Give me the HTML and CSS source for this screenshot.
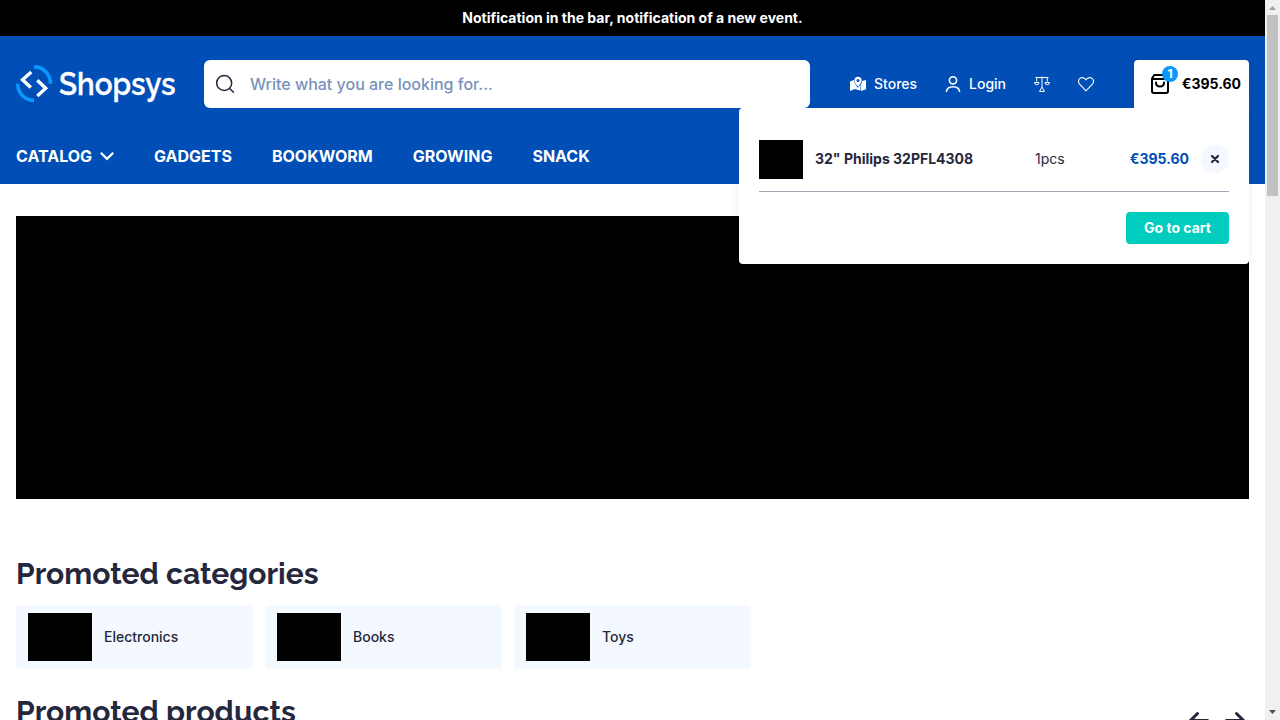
FILE: index.html
```html
<!DOCTYPE html>
<html lang="en">
<head>
<meta charset="utf-8">
<title>Shopsys</title>
<link rel="stylesheet" href="styles.css">
</head>
<body>
<div class="viewport">
  <div class="page">
    <div class="notice">Notification in the bar, notification of a new event.</div>
    <header class="header">
      <div class="topbar">
        <a class="logo">
          <svg width="160" height="40" viewBox="0 0 160 40">
            <g fill="none" stroke="#0a97ff" stroke-width="3.600">
              <path d="M18 2.900A16.400 16.400 0 0 1 34.400 19.700"/>
              <path d="M18 36.400A16.400 16.400 0 0 1 1.700 19.700"/>
            </g>
            <g fill="none" stroke="#fff" stroke-width="3.400">
              <path d="M15.300 7.900L6.500 15.700L14.800 23.600"/>
              <path d="M21.300 16.200L29.700 24.200L21.300 32"/>
            </g>
            <text class="logo-text" x="43" y="30.500" textLength="116.500" lengthAdjust="spacingAndGlyphs">Shopsys</text>
          </svg>
        </a>
        <div class="search">
          <svg width="20" height="20" viewBox="0 0 20 20" fill="none" stroke="#25283d" stroke-width="1.500" stroke-linecap="round"><circle cx="8.200" cy="9" r="7.500"/><path d="M13.700 14.500L17.400 18.200"/></svg>
          <span>Write what you are looking for...</span>
        </div>
        <div class="links">
          <a class="link">
            <svg width="16" height="16" viewBox="0 0 16 16"><path fill="#fff" d="M0 5.500L3.900 4Q4.100 7.200 6.200 9.600V13.600L5 13.100L0 15ZM6.300 9.800L8 11.700L10.500 8.600V14.500L6.300 13.500ZM11.100 8Q12.200 6.400 12.200 5L16 4V13.200L11.100 15Z"/><path fill="#fff" fill-rule="evenodd" d="M8 .8A3.600 3.600 0 0 1 11.600 4.400C11.600 6.600 9.500 8.900 8 10.700C6.500 8.900 4.400 6.600 4.400 4.400A3.600 3.600 0 0 1 8 .8ZM8 2.900A1.500 1.500 0 1 0 8 5.900A1.500 1.500 0 1 0 8 2.900Z"/></svg>
            <span>Stores</span>
          </a>
          <a class="link">
            <svg width="16" height="16" viewBox="0 0 16 16" fill="none" stroke="#fff" stroke-width="1.600"><circle cx="8" cy="4.300" r="3.600"/><path d="M1.400 16Q1.600 10.700 8 10.700Q14.400 10.700 14.600 16"/></svg>
            <span>Login</span>
          </a>
          <a class="link">
            <svg width="16" height="16" viewBox="0 0 16 16" fill="none" stroke="#fff"><path d="M1.500 1.500H14.500M8 .5V11M2.700 1.500V5.500M13.300 1.500V5.500M.5 6.500H5Q5 8.700 2.700 8.700Q.5 8.700 .5 6.500ZM11 6.500H15.500Q15.500 8.700 13.300 8.700Q11 8.700 11 6.500ZM8 11L5.500 15.400H10.500Z"/></svg>
          </a>
          <a class="link">
            <svg width="16" height="16" viewBox="0 0 16 16" fill="none" stroke="#fff" stroke-width="1.100"><path d="M8 14.800L1.800 8.500C.2 6.600.2 4.600 1.300 3C3 1 6 1 8 3.800C10 1 13 1 14.700 3C15.800 4.600 15.800 6.600 14.200 8.500Z"/></svg>
          </a>
        </div>
        <div class="cart">
          <div class="bag">
            <svg width="20" height="22" viewBox="0 0 20 22" fill="none" stroke="#000" stroke-width="2" stroke-linejoin="round"><path d="M2 5.500L4.300 2H15.700L18 5.500V18Q18 20 16 20H4Q2 20 2 18ZM2 6H18"/><path d="M6 9.500Q6 13.500 10 13.500Q14 13.500 14 9.500" stroke-linecap="round"/></svg>
            <span class="badge">1</span>
          </div>
          <span class="total">€395.60</span>
          <div class="minicart">
            <div class="item">
              <div class="thumb"></div>
              <span class="name">32" Philips 32PFL4308</span>
              <span class="qty">1pcs</span>
              <span class="price">€395.60</span>
              <span class="remove"><svg width="10" height="10" viewBox="0 0 10 10" stroke="#25283d" stroke-width="2.200" stroke-linecap="round"><path d="M2 2L8 8M8 2L2 8"/></svg></span>
            </div>
            <a class="go">Go to cart</a>
          </div>
        </div>
      </div>
      <nav class="nav">
        <a>CATALOG<svg width="14" height="10" viewBox="0 0 14 10" fill="none" stroke="#fff" stroke-width="2.200"><path d="M.8 1.700L7 7.900L13.200 1.700"/></svg></a>
        <a>GADGETS</a><a>BOOKWORM</a><a>GROWING</a><a>SNACK</a>
      </nav>
    </header>
    <main class="main">
      <div class="banner"></div>
      <h2 class="title categories-title">Promoted categories</h2>
      <div class="categories">
        <a class="category"><i class="picture"></i><span>Electronics</span></a>
        <a class="category"><i class="picture"></i><span>Books</span></a>
        <a class="category"><i class="picture"></i><span>Toys</span></a>
      </div>
      <div class="products-head">
        <h2 class="title">Promoted products</h2>
        <div class="arrows">
          <svg width="22" height="18" viewBox="0 0 22 18"><path d="M9.500 2.500L2.500 9.500L9.500 16.500M2.500 9.500H19.500"/></svg>
          <svg width="22" height="18" viewBox="0 0 22 18"><path d="M12.500 2.500L19.500 9.500L12.500 16.500M19.500 9.500H2.500"/></svg>
        </div>
      </div>
    </main>
  </div>
  <div class="scrollbar">
    <svg width="15" height="15" viewBox="0 0 15 15"><path fill="#a3a3a3" d="M4 10L7.500 6L11 10Z"/></svg>
    <div class="scroll-thumb"></div>
    <svg width="15" height="15" viewBox="0 0 15 15"><path fill="#505050" d="M4 5L7.500 9L11 5Z"/></svg>
  </div>
</div>
</body>
</html>
```
FILE: styles.css
```css
* { box-sizing: border-box; }
body { margin: 0; font-family: Inter, "Liberation Sans", sans-serif; color: #25283d; background: #fff; }
svg { display: block; flex: none; }
.viewport { display: grid; grid-template-columns: minmax(0, 1fr) 15px; height: 720px; overflow: hidden; }
.page { height: 720px; overflow: hidden; }
.notice { height: 36px; background: #000; color: #fff; font-size: 14px; font-weight: 700; line-height: 36px; text-align: center; }
.header { height: 148px; background: #004eb6; padding: 24px 16px 0; }
.topbar { display: flex; height: 48px; align-items: center; }
.logo { width: 188px; }
.logo svg { overflow: visible; }
.logo-text { font-family: Raleway, Lato, sans-serif; font-size: 31px; font-weight: 600; fill: #fff; stroke: #fff; stroke-width: .3px; }
.search { width: 606px; height: 48px; border-radius: 6px; background: #fff; display: flex; align-items: center; gap: 14px; padding-left: 12px; font-size: 16px; font-weight: 500; color: #7892bc; }
.links { display: flex; align-items: center; gap: 28px; margin-left: 40px; }
.link { display: flex; align-items: center; gap: 8px; color: #fff; font-size: 14px; line-height: 20px; font-weight: 500; }
.cart { position: relative; z-index: 2; margin-left: auto; width: 115px; height: 48px; background: #fff; border-radius: 4px 4px 0 0; display: flex; align-items: center; justify-content: space-between; padding: 0 8px 0 16px; box-shadow: 0 0 12px rgba(0,0,0,.06); }
.bag { position: relative; }
.badge { position: absolute; left: 12px; top: -7px; width: 16px; height: 16px; border-radius: 50%; background: #0a97ff; color: #fff; font-size: 12px; font-weight: 700; line-height: 16px; text-align: center; }
.total { font-size: 14px; line-height: 20px; font-weight: 700; color: #000; }
.minicart { position: absolute; right: 0; top: 48px; width: 510px; height: 156px; padding: 20px; background: #fff; border-radius: 4px 0 4px 4px; box-shadow: 0 4px 8px rgba(0,0,0,.07); }
.item { display: grid; grid-template-columns: 44px 220px 95px 1fr 28px; height: 64px; padding: 12px 0; border-bottom: 1px solid #9fa8b5; align-items: start; font-size: 14px; line-height: 38px; }
.thumb { height: 39px; background: #000; }
.name { padding-left: 12px; font-weight: 700; }
.qty { padding-left: 12px; }
.price { color: #004eb6; font-weight: 700; text-align: right; padding-right: 12px; }
.remove { width: 28px; height: 28px; margin-top: 5px; border-radius: 50%; background: #f4f9ff; display: grid; place-items: center; }
.go { display: block; width: 103px; height: 32px; margin: 20px 0 0 auto; background: #00cdbe; color: #fff; border-radius: 4px; text-align: center; font-size: 14px; font-weight: 700; line-height: 32px; }
.nav { display: flex; gap: 40px; margin-top: 36px; }
.nav a { display: flex; align-items: center; gap: 8px; color: #fff; font-size: 16px; line-height: 24px; font-weight: 700; }
.main { padding: 32px 16px 0; }
.banner { height: 283px; background: #000; }
.title { margin: 0; font-family: Raleway, Lato, sans-serif; font-size: 30px; line-height: 38px; font-weight: 700; white-space: nowrap; }
.categories-title { margin-top: 56px; }
.categories { display: flex; gap: 12px; margin-top: 12px; }
.category { width: 237px; height: 64px; border-radius: 4px; background: #f4f9ff; display: flex; align-items: center; gap: 12px; padding-left: 12px; font-size: 14px; line-height: 20px; font-weight: 500; }
.picture { width: 64px; height: 48px; background: #000; }
.products-head { display: flex; align-items: flex-start; justify-content: space-between; margin-top: 24px; }
.arrows { display: flex; gap: 14px; margin: 18px 3px 0 0; }
.arrows path { fill: none; stroke: #25283d; stroke-width: 3; stroke-linecap: round; }
.scrollbar { height: 720px; background: #f0f0f0; display: flex; flex-direction: column; align-items: center; }
.scroll-thumb { width: 11px; height: 181px; background: #c1c1c1; margin-bottom: auto; }
```
